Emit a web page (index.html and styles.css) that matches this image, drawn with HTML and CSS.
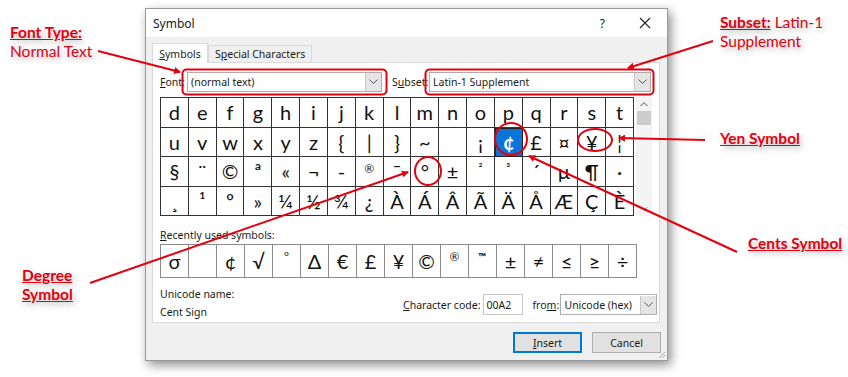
FILE: index.html
```html
<!DOCTYPE html>
<html>
<head>
<meta charset="utf-8">
<link rel="stylesheet" href="styles.css">
</head>
<body>
<div class="page">
  <div class="stage">
    <div class="dialog">
      <div class="titlebar">
        <span class="title">Symbol</span>
        <span class="help">?</span>
        <svg class="close" width="12" height="12" viewBox="0 0 12 12"><path d="M1 1L11 11M11 1L1 11" stroke="#222" stroke-width="1.1" fill="none"/></svg>
      </div>
      <div class="body">
        <div class="tabs">
          <div class="tab active"><u>S</u>ymbols</div>
          <div class="tab">S<u>p</u>ecial Characters</div>
        </div>
        <div class="panel">
          <div class="fontrow">
            <span class="lbl lbl-font"><u>F</u>ont:</span>
            <div class="combo combo-font"><span class="combo-text">(normal text)</span><span class="drop"><svg width="9" height="6" viewBox="0 0 9 6"><path d="M0.5 0.5L4.5 4.5L8.5 0.5" stroke="#555" fill="none"/></svg></span></div>
            <span class="lbl lbl-subset">S<u>u</u>bset:</span>
            <div class="combo combo-subset"><span class="combo-text">Latin-1 Supplement</span><span class="drop"><svg width="9" height="6" viewBox="0 0 9 6"><path d="M0.5 0.5L4.5 4.5L8.5 0.5" stroke="#555" fill="none"/></svg></span></div>
          </div>
          <div class="gridwrap">
            <div class="grid" id="grid">
              <div class="c">d</div><div class="c">e</div><div class="c">f</div><div class="c">g</div><div class="c">h</div><div class="c">i</div><div class="c">j</div><div class="c">k</div><div class="c">l</div><div class="c">m</div><div class="c">n</div><div class="c">o</div><div class="c">p</div><div class="c">q</div><div class="c">r</div><div class="c">s</div><div class="c">t</div>
              <div class="c">u</div><div class="c">v</div><div class="c">w</div><div class="c">x</div><div class="c">y</div><div class="c">z</div><div class="c">{</div><div class="c">|</div><div class="c">}</div><div class="c">~</div><div class="c"></div><div class="c">¡</div><div class="c sel">¢</div><div class="c">£</div><div class="c">¤</div><div class="c">¥</div><div class="c">¦</div>
              <div class="c">§</div><div class="c">¨</div><div class="c">©</div><div class="c">ª</div><div class="c">«</div><div class="c">¬</div><div class="c">-</div><div class="c sup">®</div><div class="c">¯</div><div class="c">°</div><div class="c">±</div><div class="c sup">²</div><div class="c sup">³</div><div class="c">´</div><div class="c">µ</div><div class="c">¶</div><div class="c">·</div>
              <div class="c">¸</div><div class="c">¹</div><div class="c">º</div><div class="c">»</div><div class="c">¼</div><div class="c">½</div><div class="c">¾</div><div class="c">¿</div><div class="c">À</div><div class="c">Á</div><div class="c">Â</div><div class="c">Ã</div><div class="c">Ä</div><div class="c">Å</div><div class="c">Æ</div><div class="c">Ç</div><div class="c">È</div>
            </div>
            <div class="scrollbar">
              <svg class="sb-arrow" width="16" height="14" viewBox="0 0 16 14"><path d="M4.5 9L8 5.5L11.5 9" stroke="#555" fill="none"/></svg>
              <div class="thumb"></div>
              <div class="track"></div>
              <svg class="sb-arrow" width="16" height="14" viewBox="0 0 16 14"><path d="M4.5 5L8 8.5L11.5 5" stroke="#999" fill="none"/></svg>
            </div>
          </div>
          <div class="recent-lbl"><u>R</u>ecently used symbols:</div>
          <div class="recent">
            <div class="c">σ</div><div class="c"></div><div class="c">¢</div><div class="c">√</div><div class="c sup">°</div><div class="c">Δ</div><div class="c">€</div><div class="c">£</div><div class="c">¥</div><div class="c">©</div><div class="c sup">®</div><div class="c sup tm">™</div><div class="c">±</div><div class="c">≠</div><div class="c">≤</div><div class="c">≥</div><div class="c">÷</div>
          </div>
          <div class="inforow">
            <div class="uname">
              <div>Unicode name:</div>
              <div>Cent Sign</div>
            </div>
            <div class="code">
              <span class="codelbl"><u>C</u>haracter code:</span>
              <span class="codebox">00A2</span>
              <span class="from">fro<u>m</u>:</span>
              <div class="combo combo-from"><span class="combo-text">Unicode (hex)</span><span class="drop"><svg width="9" height="6" viewBox="0 0 9 6"><path d="M0.5 0.5L4.5 4.5L8.5 0.5" stroke="#555" fill="none"/></svg></span></div>
            </div>
          </div>
        </div>
        <div class="buttons">
          <div class="btn primary"><u>I</u>nsert</div>
          <div class="btn">Cancel</div>
        </div>
        <svg class="grip" width="10" height="10" viewBox="0 0 10 10"><path d="M9 3L3 9M9 6L6 9" stroke="#aaa" fill="none"/></svg>
      </div>
    </div>
  </div>

  <svg class="overlay" width="848" height="377" viewBox="0 0 848 377">
    <defs>
      <marker id="ah" markerWidth="8" markerHeight="8" refX="6" refY="4" orient="auto" markerUnits="userSpaceOnUse">
        <path d="M0 0.5L7 4L0 7.5Z" fill="#e3000f"/>
      </marker>
    </defs>
    <rect x="182.5" y="69.5" width="204" height="25" rx="4" fill="none" stroke="#e3000f" stroke-width="2"/>
    <rect x="425.5" y="69.5" width="228" height="25" rx="4" fill="none" stroke="#e3000f" stroke-width="2"/>
    <ellipse cx="511" cy="139" rx="16" ry="16" fill="none" stroke="#e3000f" stroke-width="2"/>
    <ellipse cx="595" cy="140" rx="17" ry="11" fill="none" stroke="#e3000f" stroke-width="2"/>
    <ellipse cx="428" cy="171" rx="13" ry="14" fill="none" stroke="#e3000f" stroke-width="2"/>
    <line x1="98" y1="51" x2="180" y2="72" stroke="#e3000f" stroke-width="2" marker-end="url(#ah)"/>
    <line x1="713" y1="41" x2="628" y2="68" stroke="#e3000f" stroke-width="2" marker-end="url(#ah)"/>
    <line x1="705" y1="140" x2="619" y2="138" stroke="#e3000f" stroke-width="2" marker-end="url(#ah)"/>
    <line x1="737" y1="252" x2="529" y2="156" stroke="#e3000f" stroke-width="2" marker-end="url(#ah)"/>
    <line x1="90" y1="283" x2="408" y2="172" stroke="#e3000f" stroke-width="2" marker-end="url(#ah)"/>
  </svg>

  <div class="note note-font"><b><u>Font Type:</u></b><br>Normal Text</div>
  <div class="note note-subset"><b><u>Subset:</u></b> Latin-1<br>Supplement</div>
  <div class="note note-yen"><b><u>Yen Symbol</u></b></div>
  <div class="note note-cents"><b><u>Cents Symbol</u></b></div>
  <div class="note note-degree"><b><u>Degree<br>Symbol</u></b></div>
</div>
</body>
</html>
```
FILE: styles.css
```css
* { box-sizing: border-box; }
html, body { margin: 0; padding: 0; background: #fff; }
.page {
  position: relative;
  width: 848px;
  height: 377px;
  overflow: hidden;
  font-family: "Noto Sans", "Liberation Sans", sans-serif;
}
.stage { padding: 8px 0 0 145px; }
.dialog {
  width: 523px;
  height: 353px;
  border: 1px solid #9a9a9a;
  background: #f0f0f0;
  box-shadow: 3px 4px 10px rgba(0,0,0,0.45);
  display: flex;
  flex-direction: column;
  font-size: 10.5px;
  color: #1a1a1a;
}
.titlebar {
  height: 28px;
  background: #fff;
  display: flex;
  align-items: center;
  padding-left: 7px;
  flex: none;
}
.title { font-size: 12px; flex: 1; }
.help { font-size: 12px; margin-right: 34px; }
.close { margin-right: 16px; }
.body { position: relative; flex: 1; padding: 6px 0 0 6px; }
.tabs { display: flex; align-items: flex-end; height: 19px; }
.tab {
  height: 17px;
  padding: 0 6px;
  border: 1px solid #d9d9d9;
  border-bottom: none;
  display: flex;
  align-items: center;
  background: #f0f0f0;
  white-space: nowrap;
}
.tab.active {
  height: 20px;
  background: #fff;
  width: 56px;
  justify-content: center;
  margin-bottom: -1px;
  position: relative;
  z-index: 1;
}
.panel {
  width: 508px;
  height: 261px;
  background: #fff;
  border: 1px solid #d9d9d9;
  padding: 9px 0 0 7px;
}
.fontrow { display: flex; align-items: center; height: 20px; }
.lbl { white-space: nowrap; }
.lbl-font { width: 27px; }
.lbl-subset { width: 37px; margin-left: 10px; }
.combo {
  height: 20px;
  border: 1px solid #adadad;
  background: #fff;
  display: flex;
  align-items: center;
  flex: none;
}
.combo-text { flex: 1; padding-left: 3px; white-space: nowrap; }
.drop {
  width: 16px;
  height: 18px;
  background: #e5e5e5;
  border-left: 1px solid #c8c8c8;
  display: flex;
  align-items: center;
  justify-content: center;
}
.combo-font { width: 195px; }
.combo-subset { width: 222px; }
.gridwrap { display: flex; margin-top: 5px; height: 119px; }
.grid {
  width: 474px;
  display: grid;
  grid-template-columns: repeat(17, 1fr);
  grid-auto-rows: 29.5px;
  border-top: 1px solid #333;
  border-left: 1px solid #333;
}
.c {
  border-right: 1px solid #333;
  border-bottom: 1px solid #333;
  display: flex;
  align-items: center;
  justify-content: center;
  font-family: "Lato", "Open Sans", sans-serif;
  font-size: 20px;
  color: #111;
  line-height: 1;
}
.c.sup { font-size: 12px; align-items: flex-start; padding-top: 6px; }
.c.tm { font-size: 11px; font-weight: bold; }
.c.sel { background: #0a74d7; color: #fff; border: 1px solid #222; font-weight: bold; }
.scrollbar {
  width: 16px;
  margin-left: 2px;
  display: flex;
  flex-direction: column;
  background: #f4f4f4;
}
.sb-arrow { flex: none; }
.thumb { height: 14px; background: #cdcdcd; margin: 0 1px; flex: none; }
.track { flex: 1; }
.recent-lbl { margin-top: 12px; height: 15px; line-height: 15px; }
.recent {
  margin-top: 1px;
  width: 477px;
  height: 34px;
  display: grid;
  grid-template-columns: repeat(17, 1fr);
  border-top: 1px solid #8a8a8a;
  border-left: 1px solid #8a8a8a;
}
.recent .c { border-color: #8a8a8a; }
.inforow { display: flex; align-items: flex-start; margin-top: 9px; }
.uname { width: 243px; flex: none; display: flex; flex-direction: column; gap: 3px; line-height: 15px; }
.code { display: flex; align-items: center; margin-top: 7px; white-space: nowrap; }
.codelbl { flex: none; }
.codebox {
  width: 40px;
  height: 21px;
  border: 1px solid #c8c8c8;
  margin-left: 3px;
  display: flex;
  align-items: center;
  padding-left: 2px;
  flex: none;
}
.from { margin-left: 9px; width: 28px; flex: none; }
.combo-from { width: 97px; height: 21px; }
.buttons { display: flex; justify-content: flex-end; gap: 10px; padding-right: 6px; margin-top: 9px; }
.btn {
  width: 69px;
  height: 21px;
  background: #e1e1e1;
  border: 1px solid #adadad;
  display: flex;
  align-items: center;
  justify-content: center;
}
.btn.primary { border: 2px solid #0078d7; }
.grip { position: absolute; right: 1px; bottom: 1px; }
.overlay { position: absolute; left: 0; top: 0; pointer-events: none; }
.note {
  position: absolute;
  font-family: "Lato", "Open Sans", sans-serif;
  font-size: 15.5px;
  line-height: 19px;
  color: #e3000f;
  text-shadow: 2px 3px 6px rgba(0,0,0,0.3);
}
.note-font { left: 10px; top: 23px; }
.note-subset { left: 720px; top: 13px; }
.note-yen { left: 720px; top: 129px; }
.note-cents { left: 748px; top: 234px; }
.note-degree { left: 22px; top: 266px; }
```
